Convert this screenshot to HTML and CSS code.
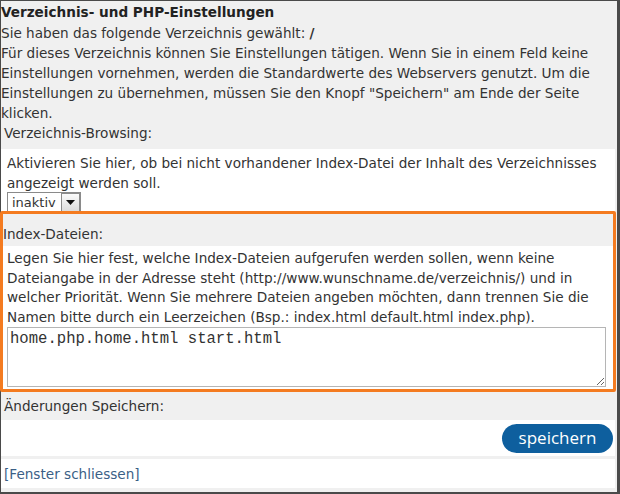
FILE: index.html
```html
<!DOCTYPE html>
<html lang="de">
<head>
    <meta charset="UTF-8">
    <title>Verzeichnis- und PHP-Einstellungen</title>
    <link rel="stylesheet" href="styles.css">
</head>
<body>
    <div class="window">
        <div class="intro">
            <h1>Verzeichnis- und PHP-Einstellungen</h1>
            <p>Sie haben das folgende Verzeichnis gewählt: <b>/</b></p>
            <p>Für dieses Verzeichnis können Sie Einstellungen tätigen. Wenn Sie in einem Feld keine Einstellungen vornehmen, werden die Standardwerte des Webservers genutzt. Um die Einstellungen zu übernehmen, müssen Sie den Knopf "Speichern" am Ende der Seite klicken.</p>
        </div>

        <div class="row-label">Verzeichnis-Browsing:</div>
        <div class="row-body browsing">
            <p>Aktivieren Sie hier, ob bei nicht vorhandener Index-Datei der Inhalt des Verzeichnisses angezeigt werden soll.</p>
            <div class="select">
                <span class="select-value">inaktiv</span>
                <span class="select-arrow">
                    <svg width="9" height="5" viewBox="0 0 9 5"><path d="M0 0h9L4.5 5z" fill="#111"/></svg>
                </span>
            </div>
        </div>

        <div class="row-label index-label">Index-Dateien:</div>
        <div class="row-body index">
            <p>Legen Sie hier fest, welche Index-Dateien aufgerufen werden sollen, wenn keine Dateiangabe in der Adresse steht (http://www.wunschname.de/verzeichnis/) und in welcher Priorität. Wenn Sie mehrere Dateien angeben möchten, dann trennen Sie die Namen bitte durch ein Leerzeichen (Bsp.: index.html default.html index.php).</p>
            <textarea class="files">home.php.home.html start.html</textarea>
        </div>

        <div class="row-label save-label">Änderungen Speichern:</div>
        <div class="row-body actions">
            <button class="save">speichern</button>
        </div>
        <div class="row-body footer">
            <a href="#">[Fenster schliessen]</a>
        </div>

        <!-- highlight frame drawn over the index section -->
        <div class="highlight"></div>
    </div>
</body>
</html>
```

FILE: styles.css
```css
body {
    margin: 0;
    font-family: "DejaVu Sans", sans-serif;
    font-size: 13.6px;
    color: #333333;
}
p {
    margin: 0;
}
.window {
    position: relative;
    width: 620px;
    height: 494px;
    box-sizing: border-box;
    border: 1px solid #4a4a4a;
    border-right-width: 3px;
    border-bottom-width: 2px;
    background: #f0f0f0;
    padding-right: 2px;
    line-height: 20px;
}
.intro {
    padding-top: 1px;
}
h1 {
    margin: 0;
    font-size: 13.6px;
    line-height: 21px;
    font-weight: bold;
    color: #222222;
}
.row-label {
    padding: 0 3px 6px;
}
.row-body {
    background: #ffffff;
    padding: 0 6px;
}
.browsing {
    padding-top: 4px;
    height: 59px;
}
.select {
    display: flex;
    align-items: flex-start;
    width: fit-content;
    height: 20px;
    margin-top: -1px;
    border: 1px solid #8a8a8a;
    border-bottom: none;
    background: #ffffff;
    font-size: 13px;
    line-height: 19px;
}
.select-value {
    padding: 0 5px 0 4px;
}
.select-arrow {
    display: flex;
    align-items: center;
    justify-content: center;
    width: 17px;
    height: 17px;
    border: 1px solid #8a8a8a;
    background: linear-gradient(#fafafa, #dcdcdc);
}
.index-label {
    padding: 12px 2px 2px;
}
.index {
    padding-top: 3px;
    padding-bottom: 3px;
    line-height: 19.5px;
}
.files {
    display: block;
    box-sizing: border-box;
    width: 599px;
    height: 60px;
    margin: 0;
    padding: 1px 2px;
    border: 1px solid #b5b5b5;
    font-family: "Liberation Mono", monospace;
    font-size: 15.6px;
    line-height: 20px;
    color: #333333;
    resize: both;
}
.save-label {
    padding: 6px 3px 4px;
}
.actions {
    display: flex;
    justify-content: flex-end;
    padding: 4px 2px 3px 6px;
}
.save {
    width: 111px;
    height: 29px;
    border: none;
    border-radius: 15px;
    background: #0e5f9e;
    color: #ffffff;
    font-family: "Open Sans", sans-serif;
    font-size: 17px;
    line-height: 27px;
    padding: 0 0 2px;
}
.footer {
    margin-top: 3px;
    padding: 5px 3px 4px;
}
.footer a {
    color: #3b5f86;
    text-decoration: none;
}
.highlight {
    position: absolute;
    left: -1px;
    top: 210px;
    width: 616px;
    height: 181px;
    box-sizing: border-box;
    border: 3px solid #f47b20;
    border-radius: 2px;
}
```
